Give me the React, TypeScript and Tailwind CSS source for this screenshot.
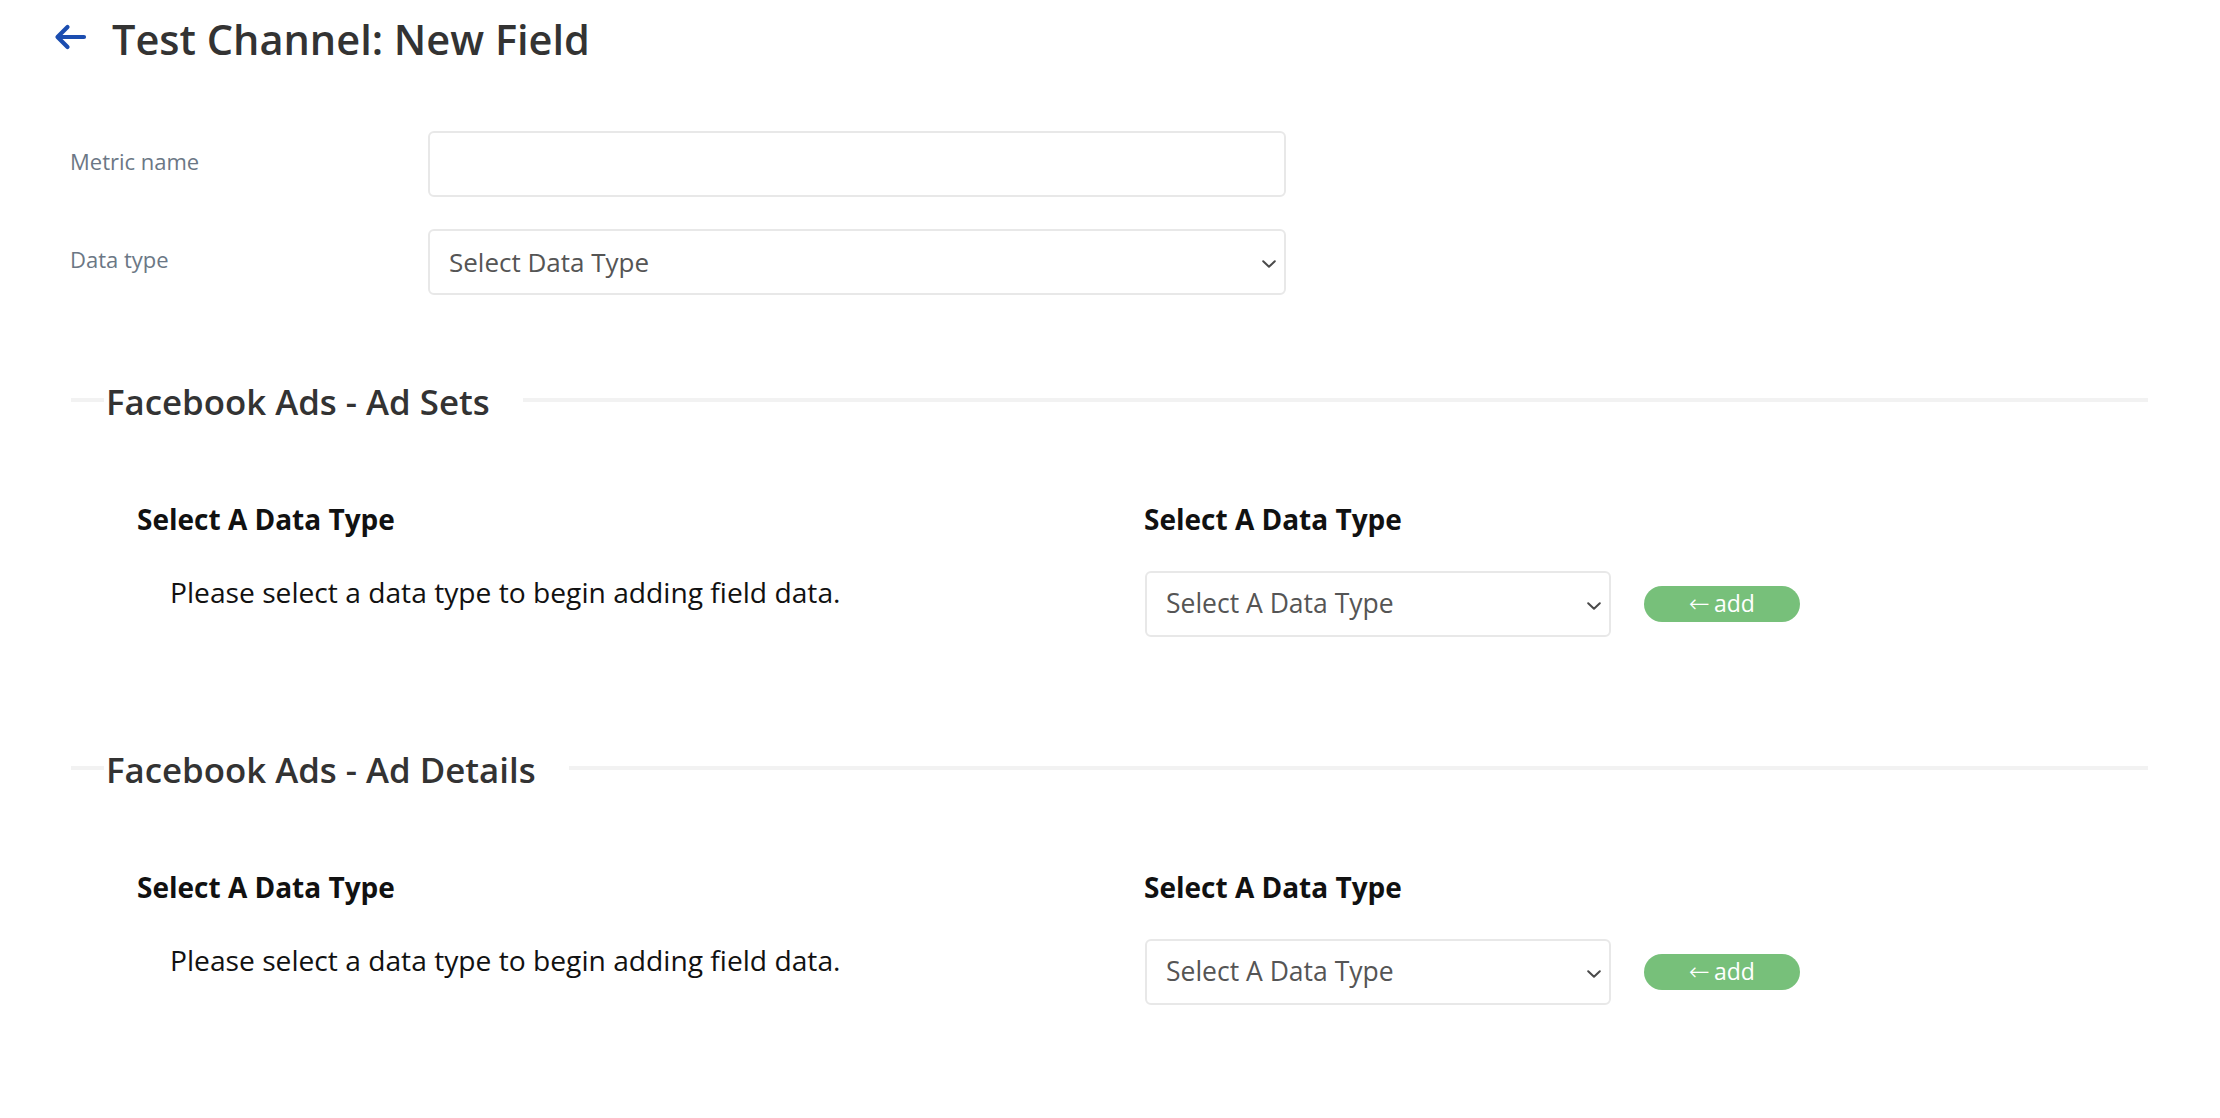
import React from "react";

function Chevron() {
  return (
    <svg width="14" height="8" viewBox="0 0 14 8" className="shrink-0 mt-[4px]">
      <path d="M1.2 1.2 L7 6.8 L12.8 1.2" fill="none" stroke="#4a4a4a" strokeWidth="2" strokeLinecap="round" strokeLinejoin="round" />
    </svg>
  );
}

function Section({ title }: { title: string }) {
  return (
    <div className="w-[2077px] ml-[71px]">
      <div className="flex items-start">
        <div className="w-[33px] h-[4px] mt-[13px] bg-[#f2f2f2]" />
        <span className="pl-[2px] pr-[33px] text-[34.8px] leading-[1] font-semibold text-[#333333]">{title}</span>
        <div className="flex-1 h-[4px] mt-[13px] bg-[#f2f2f2]" />
      </div>
      <div className="flex mt-[85px]">
        <div className="w-[1073px] pl-[66px]">
          <div className="text-[28px] leading-[1] font-bold text-[#111111]">Select A Data Type</div>
          <div className="mt-[45px] pl-[33px] text-[28.2px] leading-[1] text-[#111111]">
            Please select a data type to begin adding field data.
          </div>
        </div>
        <div className="flex-1">
          <div className="text-[28px] leading-[1] font-bold text-[#111111]">Select A Data Type</div>
          <div className="mt-[38px] flex items-center gap-[33px] pl-[1px]">
            <div className="w-[466px] h-[66px] border-2 border-[#e8e8e8] rounded-[6px] flex items-center justify-between pl-[19px] pr-[8px]">
              <span className="text-[26.5px] text-[#555555]">Select A Data Type</span>
              <Chevron />
            </div>
            <div className="w-[156px] h-[36px] rounded-full bg-[#77c07a] flex items-center justify-center text-white text-[23px] leading-[1]">
              <span className="font-['DejaVu_Sans',sans-serif] font-light text-[25px]">←</span>
              <span className="ml-[4px]">add</span>
            </div>
          </div>
        </div>
      </div>
    </div>
  );
}

export default function App() {
  return (
    <div className="min-h-screen w-full bg-white font-['Open_Sans',sans-serif]">
      <div className="h-[80px] flex items-center pl-[53px]">
        <svg width="34" height="26" viewBox="0 0 34 26" className="-mt-[7px]">
          <path d="M31 13 H5 M14.5 3 L4.5 13 L14.5 23" fill="none" stroke="#1b4db0" strokeWidth="4.2" strokeLinecap="round" strokeLinejoin="round" />
        </svg>
        <h1 className="ml-[25px] text-[41.5px] leading-[1] font-semibold text-[#333333]">Test Channel: New Field</h1>
      </div>
      <div className="mt-[51px] pl-[70px] flex flex-col gap-[32px]">
        <div className="flex items-center">
          <label className="w-[358px] mb-[6px] text-[22px] text-[#6b7785]">Metric name</label>
          <div className="w-[858px] h-[66px] border-2 border-[#e8e8e8] rounded-[6px]" />
        </div>
        <div className="flex items-center">
          <label className="w-[358px] mb-[6px] text-[22px] text-[#6b7785]">Data type</label>
          <div className="w-[858px] h-[66px] border-2 border-[#e8e8e8] rounded-[6px] flex items-center justify-between pl-[19px] pr-[8px]">
            <span className="text-[26px] text-[#555555]">Select Data Type</span>
            <Chevron />
          </div>
        </div>
      </div>
      <div className="mt-[90px]">
        <Section title="Facebook Ads - Ad Sets" />
      </div>
      <div className="mt-[116px]">
        <Section title="Facebook Ads - Ad Details" />
      </div>
    </div>
  );
}
